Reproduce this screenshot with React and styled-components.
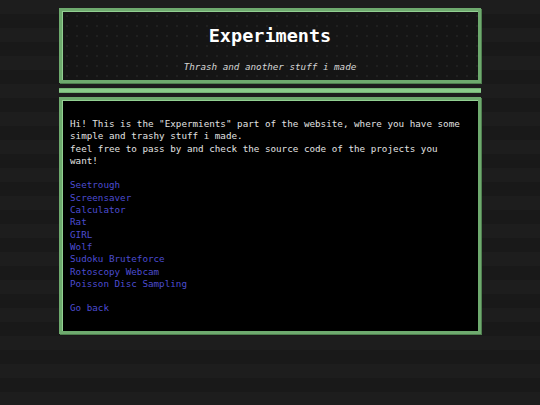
import React from "react";
import styled, { createGlobalStyle } from "styled-components";

const Global = createGlobalStyle`
  html, body { margin: 0; padding: 0; }
  body {
    min-height: 405px;
    background-color: #1a1a1a;
    background-image: repeating-linear-gradient(
      to bottom,
      #1d1d1d 0px, #1d1d1d 14px,
      #191919 14px, #191919 28px
    );
    font-family: "DejaVu Sans Mono", "Liberation Mono", monospace;
    color: #e2e2e2;
  }
`;

const Page = styled.div`
  width: 422px;
  margin: 0 auto;
  padding-top: 8px;
  display: flex;
  flex-direction: column;
`;

const Frame = styled.div`
  border: 3px solid #6eaa6e;
  box-shadow: inset 1px 1px 0 #92d092, 1px 1px 0 #4f7f4f;
`;

const Header = styled(Frame)`
  height: 69px;
  background-color: #151515;
  background-image: radial-gradient(circle, #202020 0.8px, transparent 1px);
  background-size: 10px 10px;
  display: flex;
  flex-direction: column;
  align-items: center;
`;

const Title = styled.h1`
  margin: 14px 0 0;
  font-size: 18.5px;
  line-height: 22px;
  font-weight: bold;
  color: #ffffff;
`;

const Subtitle = styled.p`
  margin: 14px 0 0;
  font-size: 9.25px;
  line-height: 12px;
  font-style: italic;
  color: #d4d4d4;
`;

const Bar = styled.div`
  margin-top: 5px;
  height: 5px;
  background: linear-gradient(to bottom, #5f9a5f 0, #8acb8a 1px, #8acb8a 4px, #5f9a5f 5px);
`;

const Main = styled(Frame)`
  margin-top: 4px;
  background: #000;
  padding: 18px 8px 16px 8px;
  font-size: 9.25px;
  line-height: 12.3px;
`;

const Para = styled.p`
  margin: 0;
`;

const LinkList = styled.ul`
  list-style: none;
  margin: 12.3px 0 0;
  padding: 0;
`;

const LinkItem = styled.li``;

const Link = styled.a`
  color: #4c4cd0;
  text-decoration: none;
`;

const Back = styled.div`
  margin-top: 12.3px;
`;

const links = [
  "Seetrough",
  "Screensaver",
  "Calculator",
  "Rat",
  "GIRL",
  "Wolf",
  "Sudoku Bruteforce",
  "Rotoscopy Webcam",
  "Poisson Disc Sampling",
];

export default function App() {
  return (
    <>
      <Global />
      <Page>
        <Header>
          <Title>Experiments</Title>
          <Subtitle>Thrash and another stuff i made</Subtitle>
        </Header>
        <Bar />
        <Main>
          <Para>
            Hi! This is the "Expermients" part of the website, where you have some
            simple and trashy stuff i made.
            <br />
            feel free to pass by and check the source code of the projects you
            want!
          </Para>
          <LinkList>
            {links.map((l) => (
              <LinkItem key={l}>
                <Link href="#">{l}</Link>
              </LinkItem>
            ))}
          </LinkList>
          <Back>
            <Link href="#">Go back</Link>
          </Back>
        </Main>
      </Page>
    </>
  );
}
